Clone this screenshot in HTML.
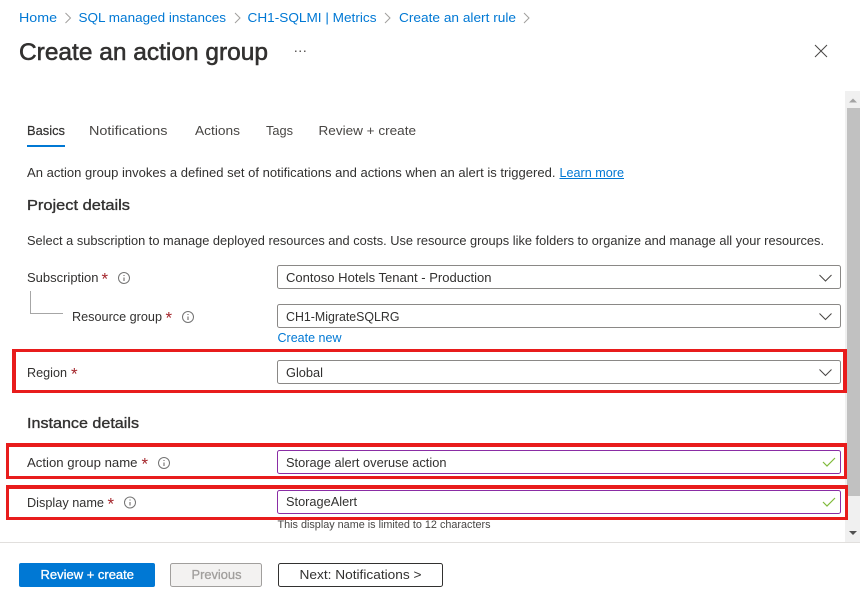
<!DOCTYPE html>
<html lang="en">
<head>
<meta charset="utf-8">
<title>Create an action group</title>
<style>
html,body{margin:0;padding:0;background:#fff;width:860px;height:606px;overflow:hidden}
svg{display:block;position:absolute;left:0;top:0}
text{font-family:"Liberation Sans",Arial,sans-serif;font-size:13px;fill:#323130}
.l{fill:#0078d4}
.s{fill:#a4262c;font-size:17px}
.h{font-size:15px;fill:#323130;stroke:#323130;stroke-width:.35px}
.f{fill:#fff;stroke:#8a8886;stroke-width:1}
.p{fill:#fff;stroke:#8a2da5;stroke-width:1}
.r{fill:#e81c1c;fill-rule:evenodd}
.c{fill:none;stroke:#a19f9d;stroke-width:1}
.d{fill:none;stroke:#484644;stroke-width:1}
.k{fill:none;stroke:#7fba3a;stroke-width:1.2}
.i{fill:none;stroke:#737373;stroke-width:1}
.t{fill:#484644}
</style>
</head>
<body>
<svg width="860" height="606" viewBox="0 0 860 606" xmlns="http://www.w3.org/2000/svg">
<rect width="860" height="606" fill="#fff"/>

<!-- Breadcrumb -->
<text class="l" x="19" y="22" textLength="38" lengthAdjust="spacingAndGlyphs">Home</text>
<path class="c" d="M65.500 13l5 5-5 5"/>
<text class="l" x="78.500" y="22" textLength="147.500" lengthAdjust="spacingAndGlyphs">SQL managed instances</text>
<path class="c" d="M235 13l5 5-5 5"/>
<text class="l" x="247.500" y="22" textLength="129" lengthAdjust="spacingAndGlyphs">CH1-SQLMI | Metrics</text>
<path class="c" d="M385 13l5 5-5 5"/>
<text class="l" x="399" y="22" textLength="117" lengthAdjust="spacingAndGlyphs">Create an alert rule</text>
<path class="c" d="M524 13l5 5-5 5"/>

<!-- Title -->
<text x="19" y="60" textLength="249" lengthAdjust="spacingAndGlyphs" style="font-size:24px;stroke:#323130;stroke-width:.55px">Create an action group</text>
<g fill="#605e5c"><rect x="295" y="50.500" width="1.500" height="1.500"/><rect x="299.500" y="50.500" width="1.500" height="1.500"/><rect x="304" y="50.500" width="1.500" height="1.500"/></g>
<path d="M815 45l12 12M827 45l-12 12" fill="none" stroke="#484644" stroke-width="1"/>

<!-- Tabs -->
<text x="27" y="135" textLength="38" lengthAdjust="spacingAndGlyphs" style="stroke:#323130;stroke-width:.2px">Basics</text>
<text class="t" x="89" y="135" textLength="78.500" lengthAdjust="spacingAndGlyphs">Notifications</text>
<text class="t" x="195" y="135" textLength="45" lengthAdjust="spacingAndGlyphs">Actions</text>
<text class="t" x="266" y="135" textLength="27" lengthAdjust="spacingAndGlyphs">Tags</text>
<text class="t" x="318.500" y="135" textLength="97.500" lengthAdjust="spacingAndGlyphs">Review + create</text>
<rect x="27" y="145" width="38" height="2" fill="#0078d4"/>

<!-- Intro -->
<text x="27" y="177" textLength="528.500" lengthAdjust="spacingAndGlyphs">An action group invokes a defined set of notifications and actions when an alert is triggered.</text>
<text class="l" x="559.500" y="177" textLength="64.500" lengthAdjust="spacingAndGlyphs">Learn more</text>
<rect x="559.500" y="178" width="64.500" height="1" fill="#0078d4"/>

<text class="h" x="27" y="210" textLength="103" lengthAdjust="spacingAndGlyphs">Project details</text>
<text x="27" y="245" textLength="797" lengthAdjust="spacingAndGlyphs">Select a subscription to manage deployed resources and costs. Use resource groups like folders to organize and manage all your resources.</text>

<!-- Subscription -->
<text x="27" y="282" textLength="71.500" lengthAdjust="spacingAndGlyphs">Subscription</text>
<text class="s" x="101.500" y="284.500">*</text>
<circle class="i" cx="124" cy="278" r="5.500"/><path d="M124 277.500v3.500M124 275v1" stroke="#605e5c" fill="none"/>
<rect class="f" x="277.500" y="265.500" width="563" height="23" rx="2"/>
<text x="286" y="282" textLength="205.500" lengthAdjust="spacingAndGlyphs">Contoso Hotels Tenant - Production</text>
<path class="d" d="M819.500 275l6 6 6-6"/>

<!-- Tree -->
<path d="M30.500 291v22.500H63" fill="none" stroke="#a6a6a6" stroke-width="1"/>

<!-- Resource group -->
<text x="72" y="321" textLength="90" lengthAdjust="spacingAndGlyphs">Resource group</text>
<text class="s" x="165.500" y="323.500">*</text>
<circle class="i" cx="188" cy="317" r="5.500"/><path d="M188 316.500v3.500M188 314v1" stroke="#605e5c" fill="none"/>
<rect class="f" x="277.500" y="304.500" width="563" height="23" rx="2"/>
<text x="286" y="321" textLength="113.500" lengthAdjust="spacingAndGlyphs">CH1-MigrateSQLRG</text>
<path class="d" d="M819.500 313.500l6 6 6-6"/>
<text class="l" x="277.500" y="342" textLength="64" lengthAdjust="spacingAndGlyphs">Create new</text>

<!-- Region -->
<text x="27" y="377" textLength="40" lengthAdjust="spacingAndGlyphs">Region</text>
<text class="s" x="71" y="379.500">*</text>
<rect class="f" x="277.500" y="360.500" width="563" height="23" rx="2"/>
<text x="286" y="377" textLength="37" lengthAdjust="spacingAndGlyphs">Global</text>
<path class="d" d="M819.500 369.500l6 6 6-6"/>

<text class="h" x="27" y="428" textLength="112" lengthAdjust="spacingAndGlyphs">Instance details</text>

<!-- Action group name -->
<text x="27" y="467" textLength="110.500" lengthAdjust="spacingAndGlyphs">Action group name</text>
<text class="s" x="141.500" y="469.500">*</text>
<circle class="i" cx="164" cy="463" r="5.500"/><path d="M164 462.500v3.500M164 460v1" stroke="#605e5c" fill="none"/>
<rect class="p" x="277.500" y="450.500" width="563" height="23" rx="2"/>
<text x="286" y="467" textLength="160.500" lengthAdjust="spacingAndGlyphs">Storage alert overuse action</text>
<path class="k" d="M823 462l4 4 8-8"/>

<!-- Display name -->
<text x="27" y="507" textLength="77" lengthAdjust="spacingAndGlyphs">Display name</text>
<text class="s" x="107.500" y="509.500">*</text>
<circle class="i" cx="130" cy="502.500" r="5.500"/><path d="M130 502v3.500M130 499.500v1" stroke="#605e5c" fill="none"/>
<rect class="p" x="277.500" y="490.500" width="563" height="23" rx="2"/>
<text x="286" y="506" textLength="71" lengthAdjust="spacingAndGlyphs">StorageAlert</text>
<path class="k" d="M823 502l4 4 8-8"/>
<text x="277.500" y="528" textLength="213" lengthAdjust="spacingAndGlyphs" style="font-size:11px;fill:#484644">This display name is limited to 12 characters</text>

<!-- Scrollbar -->
<rect x="845" y="91" width="15" height="451" fill="#f0f0f0"/>
<rect x="847" y="108" width="13" height="388" fill="#c1c1c1"/>
<path d="M849 102.500l4-4 4 4z" fill="#a3a3a3"/>
<path d="M849 531l4 4 4-4z" fill="#505050"/>

<!-- Red highlight boxes -->
<path class="r" d="M12 349H847V393H12ZM16 352V390H843V352Z"/>
<path class="r" d="M6 443H847V479H6ZM9 447V476H844V447Z"/>
<path class="r" d="M6 485H848V520H6ZM9 489V517H845V489Z"/>

<!-- Footer -->
<rect x="0" y="542" width="860" height="1" fill="#e1dfdd"/>
<rect x="19" y="563" width="136" height="24" rx="2" fill="#0078d4"/>
<text x="40.500" y="579" textLength="93.500" lengthAdjust="spacingAndGlyphs" style="fill:#fff;stroke:#fff;stroke-width:.3px">Review + create</text>
<rect x="170.500" y="563.500" width="91" height="23" rx="2" fill="#f3f2f1" stroke="#a19f9d"/>
<text x="191.500" y="579" textLength="50" lengthAdjust="spacingAndGlyphs" style="fill:#a19f9d;stroke:#a19f9d;stroke-width:.3px">Previous</text>
<rect x="278.500" y="563.500" width="164" height="23" rx="2" fill="#fff" stroke="#323130"/>
<text x="299.500" y="579" textLength="122" lengthAdjust="spacingAndGlyphs">Next: Notifications &gt;</text>
</svg>
</body>
</html>
